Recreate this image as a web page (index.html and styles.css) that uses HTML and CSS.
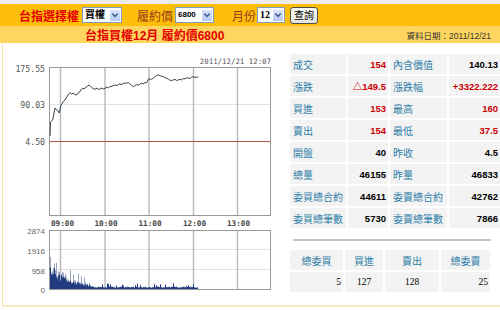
FILE: index.html
```html
<!DOCTYPE html>
<html lang="zh-Hant">
<head>
  <meta charset="UTF-8">
  <title>台指選擇權</title>
  <link rel="stylesheet" href="styles.css">
</head>
<body>
  <div class="topline"></div>
  <div class="toolbar">
    <span class="brand">台指選擇權</span>
    <span class="select sel-type"><span class="val">買權</span><span class="arrow"><svg width="11" height="12" viewBox="0 0 11 12"><polyline points="2.5,4.5 5.5,7.5 8.5,4.5" fill="none" stroke="#4a5f8c" stroke-width="1.6"/></svg></span></span>
    <span class="field f-strike">履約價</span>
    <span class="select sel-strike"><span class="val num">6800</span><span class="arrow"><svg width="11" height="12" viewBox="0 0 11 12"><polyline points="2.5,4.5 5.5,7.5 8.5,4.5" fill="none" stroke="#4a5f8c" stroke-width="1.6"/></svg></span></span>
    <span class="field f-month">月份</span>
    <span class="select sel-month"><span class="val serif">12</span><span class="arrow"><svg width="11" height="12" viewBox="0 0 11 12"><polyline points="2.5,4.5 5.5,7.5 8.5,4.5" fill="none" stroke="#4a5f8c" stroke-width="1.6"/></svg></span></span>
    <button class="query" type="button">查詢</button>
  </div>
  <div class="subbar">
    <span class="subtitle">台指買權12月 履約價6800</span>
    <span class="date">資料日期：2011/12/21</span>
  </div>

  <div class="content">
    <svg class="chart" width="279" height="262" viewBox="3 43 279 262">
      <text class="stamp" x="271" y="64" text-anchor="end">2011/12/21 12:07</text>

      <!-- price box -->
      <rect x="49.5" y="67.5" width="221" height="148" fill="#fff" stroke="#999"/>
      <line x1="50" y1="104.5" x2="270" y2="104.5" stroke="#e2e2e2"/>
      <g stroke="#b8b8b8" stroke-width="1.4">
        <line x1="60.5" y1="68" x2="60.5" y2="215"/>
        <line x1="105" y1="68" x2="105" y2="215"/>
        <line x1="149" y1="68" x2="149" y2="215"/>
        <line x1="193.5" y1="68" x2="193.5" y2="215"/>
        <line x1="237.5" y1="68" x2="237.5" y2="215"/>
      </g>
      <line x1="50" y1="141.5" x2="270" y2="141.5" stroke="#b25a45" stroke-width="1.2"/>
      <polyline fill="none" stroke="#34434f" stroke-width="1"
        points="50,136 50.5,122 52.7,120 55,108 56.7,110 58,111 59.3,113 61,105 62,104 63.3,101.5 65,100 66.7,97 68,95 70,92.7 71.5,94 73.3,93.3 75,94.5 76.7,95 78,93 80,91.7 81.5,89 82.7,88.3 84,88.8 86,87.3 87.5,86 89,85 90.5,86.5 91.7,87.3 93,88.6 95,89.3 97,88 98.5,89.5 100,89 102,88 103.5,89 105,88.3 107,87 108.5,87.8 110,86.7 112,86.2 113.5,85.5 115,85 117,85.6 118.5,84.4 120,84 122,84.5 123.5,83.2 125,83.3 127,83 128.3,82.7 130.5,84.5 133.3,86.7 135,85.5 136.7,84.7 138.5,85.2 140,84 141.7,83.3 143.5,83.8 145,82.5 146.7,82.7 148,80 149,78.3 150.5,79.5 151.7,79.3 153.5,77.8 155,76.7 156.5,75.4 158.3,75 160,75.5 161.5,76.3 163.3,76.7 165,77.5 166.7,78.3 168.5,79.2 170,80.2 171.7,80.7 173.5,79.8 175,79.3 176.5,80.4 178.3,80 180,79.2 181.5,79.9 183.3,78.7 185,78.9 186.5,77.8 188.3,78 190,78.5 191.5,77.2 193.3,76.7 195,77.6 196.5,76.9 198.3,77.3"/>
      <g class="ylab" text-anchor="end">
        <text x="45" y="72">175.55</text>
        <text x="45" y="108">90.03</text>
        <text x="45" y="145">4.50</text>
      </g>
      <g class="tlab" text-anchor="middle">
        <text x="62.5" y="225.5">09:00</text>
        <text x="106" y="225.5">10:00</text>
        <text x="150" y="225.5">11:00</text>
        <text x="194.5" y="225.5">12:00</text>
        <text x="238.5" y="225.5">13:00</text>
      </g>

      <!-- volume box -->
      <rect x="49.5" y="230.5" width="221" height="59" fill="#fff" stroke="#999"/>
      <g stroke="#e2e2e2">
        <line x1="50" y1="249.5" x2="270" y2="249.5"/>
        <line x1="50" y1="269.5" x2="270" y2="269.5"/>
      </g>
      <g stroke="#b8b8b8" stroke-width="1.4">
        <line x1="60.5" y1="231" x2="60.5" y2="289"/>
        <line x1="105" y1="231" x2="105" y2="289"/>
        <line x1="149" y1="231" x2="149" y2="289"/>
        <line x1="193.5" y1="231" x2="193.5" y2="289"/>
        <line x1="237.5" y1="231" x2="237.5" y2="289"/>
      </g>
      <path id="volLight" fill="none" stroke="#9aa6bf" stroke-width="1"/>
      <path id="volDark" fill="none" stroke="#213b80" stroke-width="1"/>
      <g class="vlab" text-anchor="end">
        <text x="45" y="234">2874</text>
        <text x="45" y="254">1916</text>
        <text x="45" y="274">958</text>
        <text x="45" y="293">0</text>
      </g>
    </svg>

    <div class="quote">
      <table class="stats">
        <tr><td class="lab">成交</td><td class="val up">154</td><td class="lab">內含價值</td><td class="val">140.13</td></tr>
        <tr><td class="lab">漲跌</td><td class="val up">△149.5</td><td class="lab">漲跌幅</td><td class="val up">+3322.222</td></tr>
        <tr><td class="lab">買進</td><td class="val up">153</td><td class="lab">最高</td><td class="val up">160</td></tr>
        <tr><td class="lab">賣出</td><td class="val up">154</td><td class="lab">最低</td><td class="val up">37.5</td></tr>
        <tr><td class="lab">開盤</td><td class="val">40</td><td class="lab">昨收</td><td class="val">4.5</td></tr>
        <tr><td class="lab">總量</td><td class="val">46155</td><td class="lab">昨量</td><td class="val">46833</td></tr>
        <tr><td class="lab">委買總合約</td><td class="val">44611</td><td class="lab">委賣總合約</td><td class="val">42762</td></tr>
        <tr><td class="lab">委買總筆數</td><td class="val">5730</td><td class="lab">委賣總筆數</td><td class="val">7866</td></tr>
      </table>
      <hr class="rule">
      <table class="orders">
        <tr><th>總委買</th><th>買進</th><th>賣出</th><th>總委賣</th></tr>
        <tr><td class="r">5</td><td>127</td><td>128</td><td class="r">25</td></tr>
      </table>
    </div>
  </div>

  <script>
    var seed = 11;
    function rnd() {
      seed = (seed * 9301 + 49297) % 233280;
      return seed / 233280;
    }
    var dark = "", light = "";
    for (var x = 50; x < 198; x++) {
      var t = x - 50;
      var h = t < 43 ? 23 * Math.exp(-t / 17) + 2 : 2;
      var d = h * (0.55 + rnd() * 0.5);
      if (t >= 43 && rnd() < 0.15) d += 1.5 + rnd() * 2.5;
      var l = d + rnd() * h * 0.45;
      if (t < 43 && rnd() < 0.2) l += 4 + rnd() * 4;
      light += "M" + (x + 0.5) + " 289V" + (289 - l).toFixed(1);
      dark += "M" + (x + 0.5) + " 289V" + (289 - d).toFixed(1);
    }
    document.getElementById("volLight").setAttribute("d", light);
    document.getElementById("volDark").setAttribute("d", dark);
  </script>
</body>
</html>
```

FILE: styles.css
```css
body {
  margin: 0;
  font-family: "Liberation Sans", "Noto Sans CJK TC", sans-serif;
  background: #fff;
  color: #000;
}
.topline {
  height: 4px;
  background: #ececec;
}
.toolbar {
  height: 22px;
  background: #fcbe08;
  display: flex;
  align-items: center;
  padding-left: 19px;
}
.brand {
  font-size: 12px;
  font-weight: bold;
  color: #e50000;
  width: 63px;
  white-space: nowrap;
}
.field {
  font-size: 12px;
  color: #9a3a1e;
  white-space: nowrap;
}
.f-strike {
  margin-left: 15px;
  width: 38px;
}
.f-month {
  margin-left: 18px;
  width: 25px;
}
.select {
  display: flex;
  align-items: center;
  justify-content: space-between;
  height: 16px;
  box-sizing: border-box;
  background: #fff;
  border: 1px solid #7f9db9;
  padding-left: 2px;
}
.sel-type {
  width: 40px;
}
.sel-strike {
  width: 39px;
}
.sel-month {
  width: 28px;
}
.select .val {
  font-size: 10px;
  line-height: 14px;
}
.select .num {
  font-size: 8px;
}
.select .serif {
  font-family: "Liberation Serif", serif;
  font-size: 10px;
}
.select .arrow {
  width: 12px;
  height: 13px;
  display: flex;
  align-items: center;
  justify-content: center;
  background: linear-gradient(#dbe6fd, #b5c9f5);
  border: 1px solid #fff;
  box-sizing: border-box;
}
.query {
  margin-left: 5px;
  width: 28px;
  height: 17px;
  padding: 0;
  font-family: "Noto Sans CJK TC", sans-serif;
  font-size: 10px;
  line-height: 14px;
  color: #000;
  background: linear-gradient(#fdfdfb, #e4e3dc);
  border: 1px solid #4d4d4d;
  border-radius: 3px;
}
.subbar {
  height: 17px;
  background: #fed65f;
  display: flex;
  align-items: center;
  justify-content: space-between;
  padding: 0 9px 0 85px;
}
.subtitle {
  font-size: 12px;
  font-weight: bold;
  color: #e50000;
}
.date {
  font-size: 8.5px;
  color: #333;
}
.content {
  display: flex;
  height: 262px;
  margin-left: 2px;
  border-left: 1px solid #f3e6a6;
  border-bottom: 2px solid #f6ecbd;
}
.chart {
  display: block;
  flex: none;
}
.stamp {
  font-family: "DejaVu Sans Mono", monospace;
  font-size: 7.4px;
  fill: #555;
}
.ylab text {
  font-family: "DejaVu Sans Mono", monospace;
  font-size: 8.2px;
  fill: #555;
}
.tlab text {
  font-family: "DejaVu Sans Mono", monospace;
  font-size: 7.7px;
  font-weight: bold;
  fill: #444;
}
.vlab text {
  font-family: "Liberation Sans", sans-serif;
  font-size: 8px;
  fill: #666;
}
.quote {
  margin-left: 6px;
  padding-top: 9px;
  width: 206px;
}
.stats,
.orders {
  border-collapse: separate;
  border-spacing: 2px;
  table-layout: fixed;
  width: 204px;
}
.stats td,
.orders td,
.orders th {
  background: #f3f3f3;
  height: 20px;
  padding: 0;
  white-space: nowrap;
}
.stats td:nth-child(1),
.orders th:nth-child(1) {
  width: 53px;
}
.stats td:nth-child(2),
.orders th:nth-child(2) {
  width: 38px;
}
.stats td:nth-child(3),
.orders th:nth-child(3) {
  width: 54px;
}
.stats td:nth-child(4),
.orders th:nth-child(4) {
  width: 49px;
}
.lab {
  font-size: 10px;
  color: #2f7ea8;
  padding-left: 3px !important;
}
.val {
  font-size: 9.5px;
  font-weight: bold;
  text-align: right;
  padding-right: 2px !important;
}
.up {
  color: #cc0000;
}
.rule {
  margin: 9px 3px 7px 5px;
  border: none;
  border-top: 2px solid #c4c4c4;
  height: 0;
}
.orders th {
  font-size: 10px;
  font-weight: normal;
  color: #2f7ea8;
  text-align: center;
}
.orders td {
  font-family: "Liberation Serif", serif;
  font-size: 9.5px;
  text-align: center;
}
.orders td.r {
  text-align: right;
  padding-right: 2px;
}
```
